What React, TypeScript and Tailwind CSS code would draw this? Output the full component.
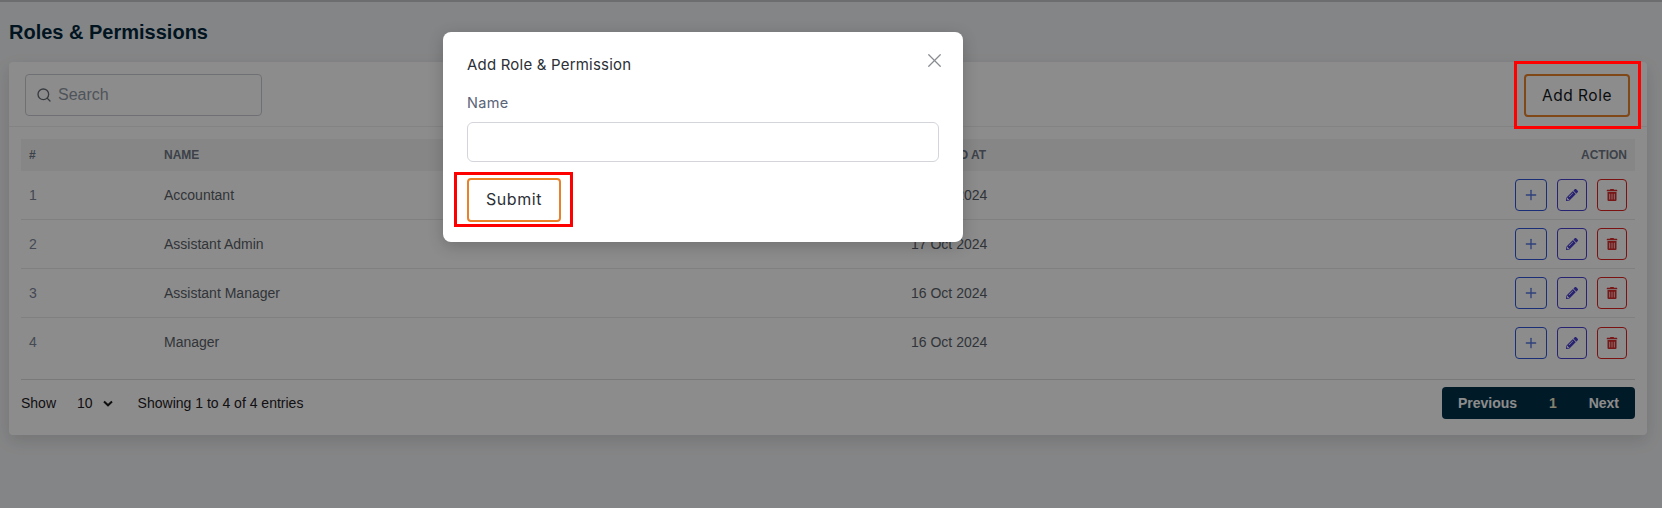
import { Plus, Search, X } from "lucide-react";
import { FaPencilAlt, FaTrashAlt } from "react-icons/fa";

const rows = [
  ["1", "Accountant", "17 Oct 2024"],
  ["2", "Assistant Admin", "17 Oct 2024"],
  ["3", "Assistant Manager", "16 Oct 2024"],
  ["4", "Manager", "16 Oct 2024"],
];

function Row({ n, name, date, border }: { n: string; name: string; date: string; border: boolean }) {
  return (
    <div className={`grid grid-cols-[135px_747px_1fr_auto] items-center h-[49px] text-[14px] ${border ? "border-b border-[#e9e9e9]" : ""}`}>
      <div className="pl-2 text-[#7c8698]">{n}</div>
      <div className="pl-2 text-[#5a5f69]">{name}</div>
      <div className="pl-2 text-[#5a5f69]">{date}</div>
      <div className="flex items-center gap-[10px] pr-2">
        <button className="flex items-center justify-center w-8 h-8 rounded border border-[#2f55d8] text-[#5476e0]">
          <Plus size={16} strokeWidth={2} />
        </button>
        <button className="flex items-center justify-center w-[30px] h-8 rounded border border-[#4a3fd0] text-[#4a3fd0]">
          <FaPencilAlt size={12} />
        </button>
        <button className="flex items-center justify-center w-[30px] h-8 rounded border border-[#e02020] text-[#d92b2b]">
          <FaTrashAlt size={12} />
        </button>
      </div>
    </div>
  );
}

export default function App() {
  return (
    <div className="relative h-[508px] overflow-hidden bg-[#f1f2f4] font-['Liberation_Sans',sans-serif]">
      <div className="h-[2px] bg-[#c4c6ca]" />
      <div className="px-[9px] pt-[18px] pr-[15px]">
        <h1 className="text-[20px] leading-[24px] font-bold text-[#02273d]">Roles &amp; Permissions</h1>
        <div className="mt-[18px] h-[373px] bg-white rounded shadow-[0_6px_16px_rgba(0,0,0,0.12)]">
          <div className="flex justify-between h-[65px] pl-4 pr-[17px] border-b border-[#eeeeee]">
            <div className="flex items-center w-[237px] h-[42px] rounded border border-[#c9cdd3] px-[10px] gap-[6px] mt-3">
              <Search size={16} strokeWidth={2} className="text-[#666c75]" />
              <span className="text-[16px] text-[#9199a5]">Search</span>
            </div>
            <div className="relative mt-3">
              <button className="w-[106px] h-[43px] rounded border-2 border-[#e9812a] text-[15.5px] tracking-[0.5px] text-[#14171b] font-['Inter',sans-serif]">
                Add Role
              </button>
              <div className="absolute z-20 -left-[10px] -top-[13px] w-[127px] h-[68px] border-[3px] border-[#ff0000]" />
            </div>
          </div>
          <div className="px-3 pt-3">
            <div className="grid grid-cols-[135px_747px_1fr_auto] items-center h-[32px] bg-[#f5f5f5] text-[12px] font-bold text-[#6f7785]">
              <div className="pl-2">#</div>
              <div className="pl-2">NAME</div>
              <div className="pl-2">CREATED AT</div>
              <div className="pr-2">ACTION</div>
            </div>
            {rows.map((r, i) => (
              <Row key={r[0]} n={r[0]} name={r[1]} date={r[2]} border={i < 3} />
            ))}
            <div className="mt-3 flex items-center justify-between border-t border-[#dddddd] pt-2 text-[14px] text-[#1e2024]">
              <div className="flex items-center h-8 -mt-[1px]">
                <span>Show</span>
                <span className="ml-[21px]">10</span>
                <svg className="ml-[10px] mt-[1px]" width="10" height="7" viewBox="0 0 10 7" fill="none">
                  <path d="M1 1.5 L5 5.3 L9 1.5" stroke="#1a1a1a" strokeWidth="2" />
                </svg>
                <span className="ml-[25px]">Showing 1 to 4 of 4 entries</span>
              </div>
              <div className="flex items-center h-8 w-[193px] rounded bg-[#02304a] text-white font-bold text-[14px] px-4 justify-between -mt-[1px]">
                <span>Previous</span>
                <span className="text-[#f5e9c8]">1</span>
                <span>Next</span>
              </div>
            </div>
          </div>
        </div>
      </div>

      <div className="absolute inset-0 z-10 bg-black/45" />

      <div className="absolute z-20 left-[443px] top-[32px] w-[520px] h-[210px] rounded-lg bg-white px-6 pt-[23px] font-['Inter',sans-serif] shadow-[0_4px_16px_rgba(0,0,0,0.2)]">
        <div className="text-[15px] leading-5 tracking-[0.2px] text-[#2c3036]">Add Role &amp; Permission</div>
        <X size={23} strokeWidth={1.3} className="absolute right-[17px] top-[17px] text-[#888b90]" />
        <div className="mt-[18px] text-[14.5px] leading-5 tracking-[0.3px] text-[#5a6478]">Name</div>
        <div className="mt-[9px] h-10 rounded-md border border-[#d3d5da]" />
        <div className="relative mt-4 w-[94px]">
          <button className="w-[94px] h-[44px] pb-[2px] rounded border-2 border-[#e9812a] text-[16px] tracking-[0.6px] text-[#2c3036]">
            Submit
          </button>
          <div className="absolute -left-[13px] -top-[6px] w-[119px] h-[55px] border-[3px] border-[#ff0000]" />
        </div>
      </div>
    </div>
  );
}
